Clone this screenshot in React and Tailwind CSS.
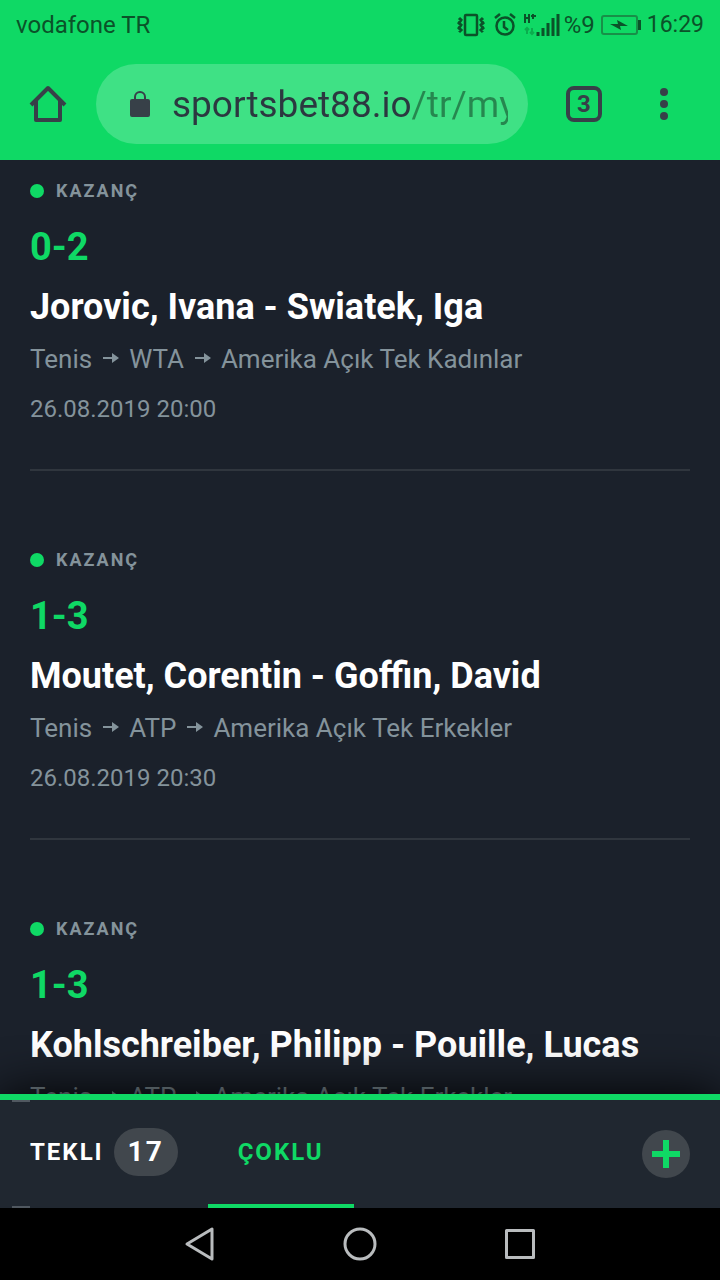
import { useState } from "react";

const bets = [
  {
    score: "0-2",
    players: "Jorovic, Ivana - Swiatek, Iga",
    path: ["Tenis", "WTA", "Amerika Açık Tek Kadınlar"],
    date: "26.08.2019 20:00",
  },
  {
    score: "1-3",
    players: "Moutet, Corentin - Goffin, David",
    path: ["Tenis", "ATP", "Amerika Açık Tek Erkekler"],
    date: "26.08.2019 20:30",
  },
  {
    score: "1-3",
    players: "Kohlschreiber, Philipp - Pouille, Lucas",
    path: ["Tenis", "ATP", "Amerika Açık Tek Erkekler"],
    date: "",
  },
];

const StatusBar = () => (
  <div className="flex h-12 items-center justify-between px-4 pt-[2px] text-2xl text-[#0b5229]">
    <span>vodafone TR</span>
    <div className="flex items-center">
      {/* vibrate */}
      <svg width="30" height="24" viewBox="0 0 30 24" fill="none" stroke="currentColor">
        <rect x="9" y="2" width="12" height="20" rx="1" strokeWidth="2.500" />
        <path d="M3 5l2 2-2 3 2 2-2 3 2 2-2 2M27 5l-2 2 2 3-2 2 2 3-2 2 2 2" strokeWidth="3" />
      </svg>
      {/* alarm */}
      <svg className="ml-2" width="22" height="24" viewBox="0 0 22 24" fill="none" stroke="currentColor" strokeWidth="2.500">
        <circle cx="11" cy="13" r="8.500" />
        <path d="M1 5l5-4M21 5l-5-4M10 8v6l4 3" />
      </svg>
      {/* network */}
      <svg className="ml-2" width="36" height="24" viewBox="0 0 36 24" fill="none" stroke="currentColor">
        <path d="M1 1v9M5 1v9M1 5h4" strokeWidth="2" />
        <path d="M7 3h5M9 1v5" strokeWidth="2" />
        <path d="M3 21v-6M1 17l2-2 2 2M8 15v6M6 19l2 2 2-2" stroke="#0bad4e" strokeWidth="2" />
        <path d="M14 19v4M19 15v8M24 10v13M29 5v18M34 1v22" strokeWidth="3" />
      </svg>
      <span className="ml-1">%9</span>
      {/* battery */}
      <svg className="ml-1" width="44" height="22" viewBox="0 0 44 22" fill="none">
        <rect x="3" y="2" width="35" height="18" rx="2" stroke="#188f48" strokeWidth="2" />
        <path d="M39 6h3v10h-3z" fill="currentColor" />
        <path d="M11 10h8l-1-4 11 6h-8l1 4z" fill="currentColor" />
      </svg>
      <span className="ml-1 text-[23px]">16:29</span>
    </div>
  </div>
);

const AddressBar = () => (
  <div className="flex items-center pt-4 pr-[46px] pb-4 pl-7 text-[#374048]">
    <button type="button" aria-label="Ana sayfa" className="shrink-0">
      <svg width="40" height="40" viewBox="0 0 40 40" fill="none" stroke="currentColor" strokeWidth="4" strokeLinejoin="round">
        <path d="M3 21L20 4l17 17" />
        <path d="M8 17v19h24V17" />
      </svg>
    </button>
    <label className="ml-7 flex h-20 min-w-0 flex-1 items-center rounded-full bg-[#3fe185] pr-5 pl-8">
      <svg className="shrink-0" width="24" height="28" viewBox="0 0 24 28">
        <path d="M7 12V7a5 5 0 0 1 10 0v5" fill="none" stroke="currentColor" strokeWidth="2" />
        <rect x="2" y="9" width="20" height="18" rx="2" fill="currentColor" />
      </svg>
      <input
        type="text"
        aria-label="Adres"
        defaultValue="sportsbet88.io/tr/mybets"
        className="ml-5 h-12 min-w-0 flex-1 bg-linear-to-r from-[#2c3840] from-[239px] to-[#26874f] to-[239px] bg-clip-text pt-[2px] text-[37px] text-transparent outline-none"
      />
    </label>
    <button
      type="button"
      aria-label="Sekmeler"
      className="ml-[38px] flex size-9 shrink-0 items-center justify-center rounded-lg border-4 border-[#374048] text-2xl font-bold"
    >
      3
    </button>
    <button type="button" aria-label="Menü" className="ml-12 shrink-0">
      <svg width="24" height="36" viewBox="0 0 24 36" fill="currentColor">
        <circle cx="14" cy="6" r="4" />
        <circle cx="14" cy="18" r="4" />
        <circle cx="14" cy="30" r="4" />
      </svg>
    </button>
  </div>
);

const Arrow = () => (
  <svg width="17" height="14" viewBox="0 0 17 14">
    <path d="M1 6h11" stroke="currentColor" strokeWidth="2" />
    <path d="M10 1l7 5-7 5z" fill="currentColor" />
  </svg>
);

const Bet = ({ bet }) => (
  <li className="mb-[79px] border-b-2 border-[#30363e] pb-[46px] text-[#84939b]">
    <div className="flex items-center gap-3">
      <span className="size-[14px] rounded-full bg-[#0fd965]" />
      <span className="text-lg leading-5 font-bold tracking-[2px]">KAZANÇ</span>
    </div>
    <p className="mt-[22px] text-[38px] leading-12 font-bold text-[#0fd965]">{bet.score}</p>
    <h2 className="mt-[14px] text-4xl leading-11 font-bold whitespace-nowrap text-white">{bet.players}</h2>
    <p className="mt-[14px] flex items-center gap-[10px] text-[26px] leading-8 whitespace-nowrap">
      {bet.path.map((part, i) => (
        <span key={part} className="flex items-center gap-[10px]">
          {i > 0 && <Arrow />}
          {part}
        </span>
      ))}
    </p>
    <p className="mt-5 text-2xl leading-7">{bet.date}</p>
  </li>
);

const SlipTabs = () => {
  const [active, setActive] = useState("multi");

  return (
    <div className="relative flex h-[114px] shrink-0 items-stretch border-t-[6px] border-[#0fd965] bg-[#202730] pr-[30px] text-2xl font-bold tracking-[2px] shadow-[0_0_50px_#000000]">
      <div role="tablist" className="flex">
        <button
          type="button"
          role="tab"
          aria-selected={active === "single"}
          onClick={() => setActive("single")}
          className={`relative flex items-center gap-[10px] border-b-4 px-[30px] ${
            active === "single" ? "border-[#0fd965] text-[#0fd965]" : "border-transparent text-white"
          }`}
        >
          <span className="absolute top-0 left-3 h-[2px] w-[18px] bg-[#505860]" />
          <span className="absolute -bottom-1 left-3 h-[2px] w-[18px] bg-[#505860]" />
          TEKLI
          <span className="flex h-12 w-16 items-center justify-center rounded-full bg-[#41474d] text-[28px] text-white">
            17
          </span>
        </button>
        <button
          type="button"
          role="tab"
          aria-selected={active === "multi"}
          onClick={() => setActive("multi")}
          className={`border-b-4 px-[30px] ${
            active === "multi" ? "border-[#0fd965] text-[#0fd965]" : "border-transparent text-white"
          }`}
        >
          ÇOKLU
        </button>
      </div>
      <button
        type="button"
        aria-label="Ekle"
        className="ml-auto flex size-12 items-center justify-center self-center rounded-full bg-[#41474d]"
      >
        <svg width="28" height="28" viewBox="0 0 28 28" stroke="#0fd965" strokeWidth="6">
          <path d="M14 0v28M0 14h28" />
        </svg>
      </button>
    </div>
  );
};

const SystemNav = () => (
  <nav className="relative flex h-[72px] shrink-0 items-center justify-center gap-30 bg-black text-[#b9bcbe]">
    <button type="button" aria-label="Geri">
      <svg width="40" height="40" viewBox="0 0 40 40" fill="none" stroke="currentColor" strokeWidth="3" strokeLinejoin="round">
        <path d="M7 20L32 5v30z" />
      </svg>
    </button>
    <button type="button" aria-label="Ana ekran">
      <svg width="40" height="40" viewBox="0 0 40 40" fill="none" stroke="currentColor" strokeWidth="3">
        <circle cx="20" cy="20" r="15" />
      </svg>
    </button>
    <button type="button" aria-label="Son uygulamalar">
      <svg width="40" height="40" viewBox="0 0 40 40" fill="none" stroke="currentColor" strokeWidth="3" strokeLinejoin="round">
        <rect x="6.500" y="6.500" width="27" height="27" />
      </svg>
    </button>
  </nav>
);

const App = () => (
  <div className="flex h-screen flex-col bg-[#1b212b] font-['Roboto','Noto_Sans',sans-serif]">
    <header className="shrink-0 bg-[#0fd965]">
      <StatusBar />
      <AddressBar />
    </header>
    <main className="min-h-0 flex-1 overflow-hidden px-[30px] pt-[21px]">
      <ul>
        {bets.map((bet) => (
          <Bet key={bet.players} bet={bet} />
        ))}
      </ul>
    </main>
    <SlipTabs />
    <SystemNav />
  </div>
);

export default App;
